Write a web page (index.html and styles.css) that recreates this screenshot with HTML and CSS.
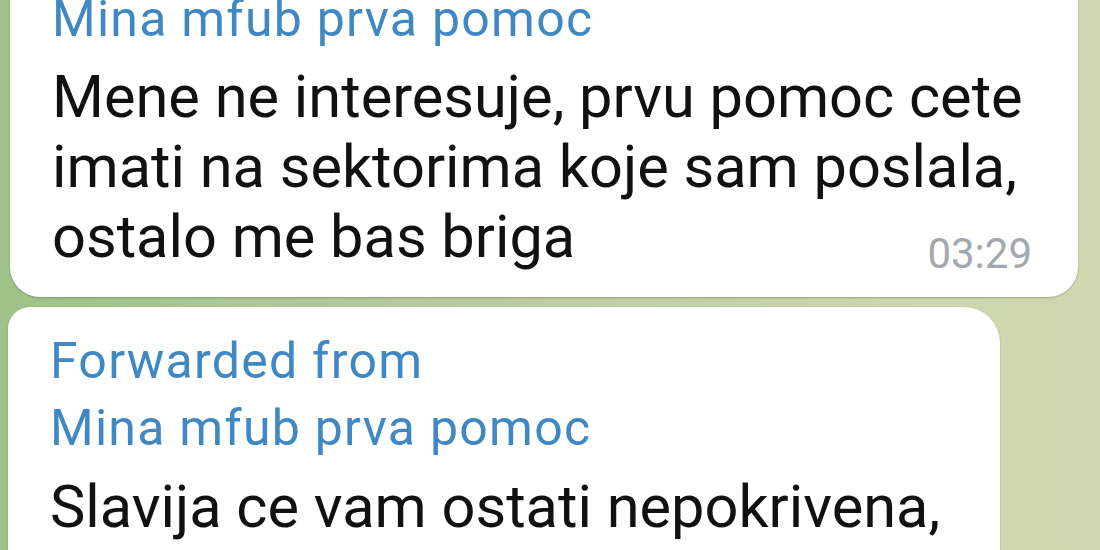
FILE: index.html
```html
<!DOCTYPE html>
<html>
<head>
<meta charset="utf-8">
<link rel="stylesheet" href="styles.css">
</head>
<body>
<div class="chat">
  <div class="bubble bubble-first">
    <div class="sender">Mina mfub prva pomoc</div>
    <div class="text">Mene ne interesuje, prvu pomoc cete<br>imati na sektorima koje sam poslala,<br>ostalo me bas briga</div>
    <div class="meta"><span class="time">03:29</span></div>
  </div>
  <div class="bubble bubble-second">
    <div class="sender">Forwarded from<br>Mina mfub prva pomoc</div>
    <div class="text">Slavija ce vam ostati nepokrivena,</div>
  </div>
</div>
</body>
</html>
```

FILE: styles.css
```css
html, body {
  margin: 0;
  padding: 0;
  width: 1100px;
  height: 550px;
  overflow: hidden;
}
body {
  background: linear-gradient(90deg, #9ec289 0%, #abc693 20%, #c0cfa3 55%, #ccd5ac 80%, #d1d8b1 100%);
  font-family: Roboto, "Noto Sans", "Liberation Sans", sans-serif;
}
.chat {
  display: flex;
  flex-direction: column;
  gap: 10px;
  margin-top: -14px;
}
.bubble {
  background: #ffffff;
  box-shadow: 0 1px 2px rgba(60, 80, 40, 0.35);
  padding-left: 42px;
}
.bubble-first {
  margin-left: 10px;
  width: 1026px;
  border-radius: 0 0 30px 30px;
  padding-bottom: 19px;
}
.bubble-second {
  margin-left: 8px;
  width: 950px;
  border-radius: 22px 36px 0 0;
  padding-top: 21px;
  height: 300px;
}
.sender {
  color: #4088c3;
  font-size: 50px;
  line-height: 67px;
  letter-spacing: 1.25px;
}
.text {
  color: #111111;
  font-size: 59.5px;
  line-height: 70px;
}
.bubble-first .text {
  margin-top: 9px;
}
.bubble-second .text {
  margin-top: 10px;
}
.meta {
  display: flex;
  justify-content: flex-end;
  margin-top: -42px;
  padding-right: 46px;
}
.time {
  color: #a2a8ae;
  font-size: 42px;
  line-height: 48px;
}
```
